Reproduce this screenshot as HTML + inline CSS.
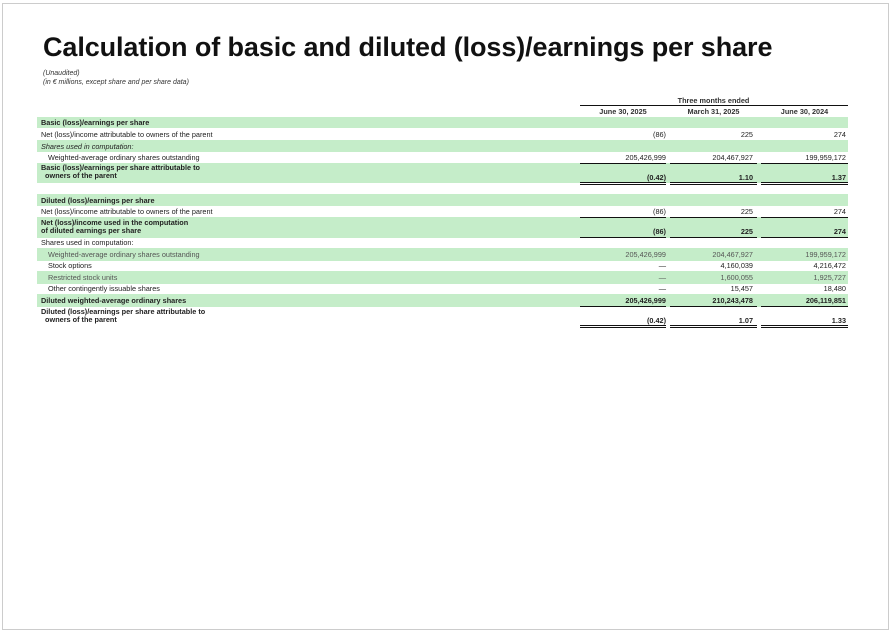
<!DOCTYPE html>
<html><head><meta charset="utf-8"><style>
body{margin:0;background:#fff;font-family:"Liberation Sans",Arial,sans-serif;color:#222}
.page{position:absolute;left:2px;top:3px;width:885px;height:625px;border:1px solid #ccc;background:#fff}
h1{position:absolute;left:43px;top:32px;margin:0;font-size:27px;font-weight:bold;color:#111;letter-spacing:-0.1px}
.sub{position:absolute;left:43px;font-size:7px;font-style:italic;color:#333}
.r{position:absolute;left:37px;width:811px;font-size:7.3px}
.g{background:#c5edc9}
.l{position:absolute;left:4px}
.v{position:absolute;text-align:right;width:86px}
.b{font-weight:bold}
.line{position:absolute;height:1px;background:#111}
.hd{position:absolute;font-size:7.3px;text-align:center;font-weight:bold;color:#333}
</style></head><body><div class="page"></div>
<h1>Calculation of basic and diluted (loss)/earnings per share</h1>
<div class="sub" style="top:70px">(Unaudited)</div>
<div class="sub" style="top:79px">(in € millions, except share and per share data)</div>
<div class="hd" style="left:670px;width:87px;top:96px">Three months ended</div>
<div class="line" style="left:580px;width:268px;top:105px"></div>
<div class="hd" style="left:580px;width:86px;top:107px">June 30, 2025</div>
<div class="hd" style="left:670px;width:87px;top:107px">March 31, 2025</div>
<div class="hd" style="left:761px;width:87px;top:107px">June 30, 2024</div>
<div class="line" style="left:580px;width:86px;top:117px"></div>
<div class="line" style="left:670px;width:87px;top:117px"></div>
<div class="line" style="left:761px;width:87px;top:117px"></div>

<div class="r g b" style="top:117px;height:11px"><span class="l" style="top:1px">Basic (loss)/earnings per share</span></div>
<div class="r" style="top:128px;height:12px"><span class="l" style="top:2px">Net (loss)/income attributable to owners of the parent</span><span class="v" style="left:541px;top:2px;width:88px">(86)</span><span class="v" style="left:630px;top:2px">225</span><span class="v" style="left:722px;top:2px;width:87px">274</span></div>
<div class="r g" style="top:140px;height:12px;font-style:italic"><span class="l" style="top:2px">Shares used in computation:</span></div>
<div class="r" style="top:152px;height:11px"><span class="l" style="left:11px;top:1px">Weighted-average ordinary shares outstanding</span><span class="v" style="left:541px;top:1px;width:88px">205,426,999</span><span class="v" style="left:630px;top:1px">204,467,927</span><span class="v" style="left:722px;top:1px;width:87px">199,959,172</span></div>
<div class="r g" style="top:163px;height:20px"><span class="l b" style="top:1px;line-height:7.5px">Basic (loss)/earnings per share attributable to<br>&nbsp;&nbsp;owners of the parent</span><span class="v b" style="left:541px;top:10px;width:88px">(0.42)</span><span class="v b" style="left:630px;top:10px">1.10</span><span class="v b" style="left:722px;top:10px;width:87px">1.37</span></div>

<div class="r g b" style="top:194px;height:12px"><span class="l" style="top:2px">Diluted (loss)/earnings per share</span></div>
<div class="r" style="top:206px;height:11px"><span class="l" style="top:1px">Net (loss)/income attributable to owners of the parent</span><span class="v" style="left:541px;top:1px;width:88px">(86)</span><span class="v" style="left:630px;top:1px">225</span><span class="v" style="left:722px;top:1px;width:87px">274</span></div>
<div class="r g" style="top:217px;height:21px"><span class="l b" style="top:2px;line-height:7.5px">Net (loss)/income used in the computation<br>of diluted earnings per share</span><span class="v b" style="left:541px;top:10px;width:88px">(86)</span><span class="v b" style="left:630px;top:10px">225</span><span class="v b" style="left:722px;top:10px;width:87px">274</span></div>
<div class="r" style="top:238px;height:10px"><span class="l" style="top:0px">Shares used in computation:</span></div>
<div class="r g" style="top:248px;height:13px;color:#555"><span class="l" style="left:11px;top:2px">Weighted-average ordinary shares outstanding</span><span class="v" style="left:541px;top:2px;width:88px">205,426,999</span><span class="v" style="left:630px;top:2px">204,467,927</span><span class="v" style="left:722px;top:2px;width:87px">199,959,172</span></div>
<div class="r" style="top:261px;height:10px"><span class="l" style="left:11px;top:0px">Stock options</span><span class="v" style="left:541px;top:0px;width:88px">—</span><span class="v" style="left:630px;top:0px">4,160,039</span><span class="v" style="left:722px;top:0px;width:87px">4,216,472</span></div>
<div class="r g" style="top:271px;height:13px;color:#555"><span class="l" style="left:11px;top:2px">Restricted stock units</span><span class="v" style="left:541px;top:2px;width:88px">—</span><span class="v" style="left:630px;top:2px">1,600,055</span><span class="v" style="left:722px;top:2px;width:87px">1,925,727</span></div>
<div class="r" style="top:284px;height:10px"><span class="l" style="left:11px;top:0px">Other contingently issuable shares</span><span class="v" style="left:541px;top:0px;width:88px">—</span><span class="v" style="left:630px;top:0px">15,457</span><span class="v" style="left:722px;top:0px;width:87px">18,480</span></div>
<div class="r g b" style="top:294px;height:13px"><span class="l" style="top:2px">Diluted weighted-average ordinary shares</span><span class="v" style="left:541px;top:2px;width:88px">205,426,999</span><span class="v" style="left:630px;top:2px">210,243,478</span><span class="v" style="left:722px;top:2px;width:87px">206,119,851</span></div>
<div class="r" style="top:307px;height:20px"><span class="l b" style="top:1px;line-height:7.5px">Diluted (loss)/earnings per share attributable to<br>&nbsp;&nbsp;owners of the parent</span><span class="v b" style="left:541px;top:9px;width:88px">(0.42)</span><span class="v b" style="left:630px;top:9px">1.07</span><span class="v b" style="left:722px;top:9px;width:87px">1.33</span></div>

<!-- rules -->
<div class="line" style="left:580px;width:86px;top:163px"></div><div class="line" style="left:670px;width:87px;top:163px"></div><div class="line" style="left:761px;width:87px;top:163px"></div>
<div class="line" style="left:580px;width:86px;top:182px"></div><div class="line" style="left:670px;width:87px;top:182px"></div><div class="line" style="left:761px;width:87px;top:182px"></div>
<div class="line" style="left:580px;width:86px;top:184px"></div><div class="line" style="left:670px;width:87px;top:184px"></div><div class="line" style="left:761px;width:87px;top:184px"></div>
<div class="line" style="left:580px;width:86px;top:217px"></div><div class="line" style="left:670px;width:87px;top:217px"></div><div class="line" style="left:761px;width:87px;top:217px"></div>
<div class="line" style="left:580px;width:86px;top:237px"></div><div class="line" style="left:670px;width:87px;top:237px"></div><div class="line" style="left:761px;width:87px;top:237px"></div>
<div class="line" style="left:580px;width:86px;top:306px"></div><div class="line" style="left:670px;width:87px;top:306px"></div><div class="line" style="left:761px;width:87px;top:306px"></div>
<div class="line" style="left:580px;width:86px;top:325px"></div><div class="line" style="left:670px;width:87px;top:325px"></div><div class="line" style="left:761px;width:87px;top:325px"></div>
<div class="line" style="left:580px;width:86px;top:327px"></div><div class="line" style="left:670px;width:87px;top:327px"></div><div class="line" style="left:761px;width:87px;top:327px"></div>
</body></html>
